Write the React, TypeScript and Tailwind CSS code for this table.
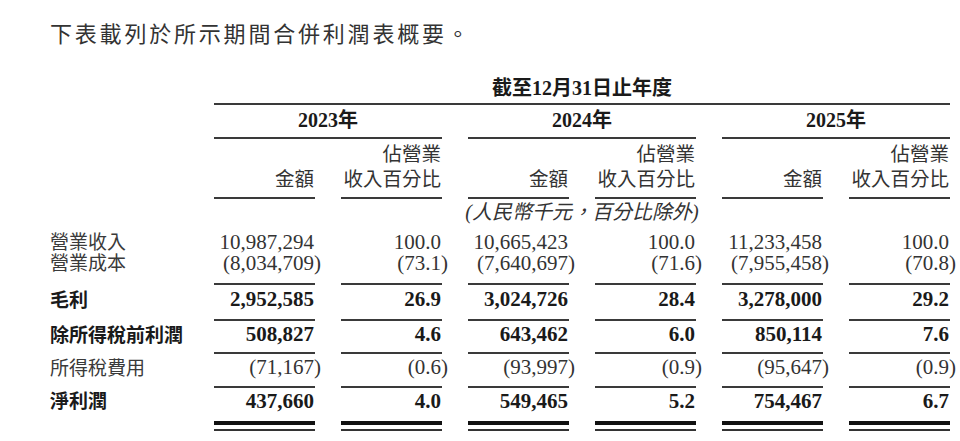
import React from "react";

// Summary of consolidated income statement
const grid = "grid grid-cols-[138px_repeat(6,101px)] gap-x-[26px]";
const rule = "border-[#3a3a3a]";

type Line = {
  label: string;
  bold?: boolean;
  values: string[];
  box: string;
  underline?: boolean;
};

// each row box ends where the next rule sits; rules are drawn as a bottom border
const lines: Line[] = [
  {
    label: "營業收入",
    values: ["10,987,294", "100.0", "10,665,423", "100.0", "11,233,458", "100.0"],
    box: "h-[28px] items-end",
  },
  {
    label: "營業成本",
    values: ["(8,034,709)", "(73.1)", "(7,640,697)", "(71.6)", "(7,955,458)", "(70.8)"],
    box: "h-[32px] items-start pb-[2px]",
    underline: true,
  },
  {
    label: "毛利",
    bold: true,
    values: ["2,952,585", "26.9", "3,024,726", "28.4", "3,278,000", "29.2"],
    box: "h-[36px] items-center pb-[6px]",
    underline: true,
  },
  {
    label: "除所得稅前利潤",
    bold: true,
    values: ["508,827", "4.6", "643,462", "6.0", "850,114", "7.6"],
    box: "h-[33px] items-center pb-[5px]",
    underline: true,
  },
  {
    label: "所得稅費用",
    values: ["(71,167)", "(0.6)", "(93,997)", "(0.9)", "(95,647)", "(0.9)"],
    box: "h-[34px] items-center pb-[6px]",
    underline: true,
  },
  {
    label: "淨利潤",
    bold: true,
    values: ["437,660", "4.0", "549,465", "5.2", "754,467", "6.7"],
    box: "h-[33px] items-center pb-[7px]",
  },
];

function Num({ value }: { value: string }) {
  // closing paren hangs past the column edge so digits stay aligned
  if (value.endsWith(")")) {
    return (
      <span>
        {value.slice(0, -1)}
        <span className="-mr-[7px]">)</span>
      </span>
    );
  }
  return <span>{value}</span>;
}

export default function App() {
  const years = ["2023年", "2024年", "2025年"];

  return (
    <div className="w-[960px] h-[441px] overflow-hidden bg-white text-[#2a2a2a] font-['Liberation_Serif','Noto_Sans_CJK_TC',serif]">
      {/* Intro */}
      <div className="h-[76px] pt-[24px] pl-[50px]">
        <p className="text-[22px] leading-[22px] tracking-[2.8px] text-[#333]">
          下表載列於所示期間合併利潤表概要。
        </p>
      </div>

      <div className="px-[50px]">
        {/* Period heading */}
        <div className={grid}>
          <div
            className={`col-start-2 col-span-6 h-[29px] border-b-2 ${rule} flex items-center justify-center pb-[3px] text-[20px] leading-[20px] font-bold text-[#1a1a1a]`}
          >
            截至12月31日止年度
          </div>
        </div>

        {/* Years */}
        <div className={grid}>
          <div />
          {years.map((y) => (
            <div
              key={y}
              className={`col-span-2 h-[34px] border-b-2 ${rule} flex items-center justify-center pb-[2px] text-[20px] leading-[20px] font-bold text-[#1a1a1a]`}
            >
              {y}
            </div>
          ))}
        </div>

        {/* Column headers */}
        <div className={grid}>
          <div />
          {years.map((y) => (
            <React.Fragment key={y}>
              <div
                className={`h-[60px] border-b-2 ${rule} pt-[3px] pr-[1px] text-right text-[19.5px] leading-[25px] text-[#333]`}
              >
                <div>&nbsp;</div>
                <div>金額</div>
              </div>
              <div
                className={`h-[60px] border-b-2 ${rule} pt-[3px] pr-[1px] text-right text-[19.5px] leading-[25px] text-[#333]`}
              >
                <div>佔營業</div>
                <div>收入百分比</div>
              </div>
            </React.Fragment>
          ))}
        </div>

        {/* Unit note */}
        <div className={grid}>
          <div className="col-start-4 col-span-2 h-[26px] flex items-center justify-center text-[20px] leading-[20px] italic text-[#333] whitespace-nowrap">
            (人民幣千元，百分比除外)
          </div>
        </div>

        {/* Body rows */}
        {lines.map((line) => (
          <div key={line.label} className={grid}>
            <div
              className={`flex ${line.box} text-[19px] leading-[21px] whitespace-nowrap ${
                line.bold ? "font-bold text-[#1a1a1a]" : "text-[#3a3a3a]"
              }`}
            >
              {line.label}
            </div>
            {line.values.map((v, i) => (
              <div
                key={i}
                className={`flex justify-end pr-[1px] ${line.box} ${
                  line.underline ? "border-b-2 border-[#3a3a3a]" : ""
                } text-[21px] leading-[21px] ${
                  line.bold ? "font-bold text-[#1a1a1a]" : "text-[#333]"
                }`}
              >
                <Num value={v} />
              </div>
            ))}
          </div>
        ))}

        {/* Double underline */}
        <div className={grid}>
          <div />
          {lines[0].values.map((_, i) => (
            <div key={i} className="h-[10px] border-t-4 border-b-2 border-t-[#111] border-b-[#333]" />
          ))}
        </div>
      </div>
    </div>
  );
}
